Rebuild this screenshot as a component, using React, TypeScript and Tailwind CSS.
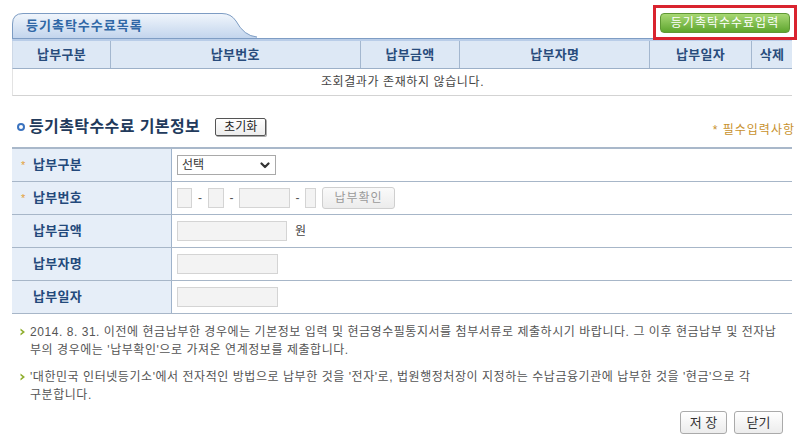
import React from "react";

const FONT = "font-['Liberation_Sans','Noto_Sans_CJK_KR',sans-serif]";

function Chevron() {
  return (
    <svg width="10" height="7" viewBox="0 0 10 7">
      <path d="M1.5 1.5 L5 5 L8.5 1.5" fill="none" stroke="#333" strokeWidth="2.2" strokeLinecap="round" strokeLinejoin="round" />
    </svg>
  );
}

function Arrow() {
  return (
    <svg width="6" height="8" viewBox="0 0 6 8" className="shrink-0 mt-[5px]">
      <path d="M0.5 0.5 L5 4 L0.5 7.5 L0.5 5.5 L2.5 4 L0.5 2.5 Z" fill="#8fae2e" />
    </svg>
  );
}

function FormRow({ label, required, children }: { label: string; required?: boolean; children: React.ReactNode }) {
  return (
    <div className="flex h-[33px] border-b border-[#a7b6c8]">
      <div className="w-[160px] shrink-0 bg-[#e6eef8] border-r border-[#9fb3cb] flex items-center pl-[9px]">
        <span className="w-[12px] text-[#e3a13a] text-[11px] leading-none">{required ? "*" : ""}</span>
        <span className="text-[13px] font-bold text-[#23497b] tracking-[0.3px]">{label}</span>
      </div>
      <div className="flex-1 flex items-center pl-[5px]">{children}</div>
    </div>
  );
}

function Input({ w }: { w: string }) {
  return <div className={`${w} h-[20px] bg-[#f3f3f3] border border-[#d4d4d4]`} />;
}

export default function App() {
  const cols = [
    { w: "w-[98px]", t: "납부구분" },
    { w: "w-[250px]", t: "납부번호" },
    { w: "w-[100px]", t: "납부금액" },
    { w: "w-[190px]", t: "납부자명" },
    { w: "w-[102px]", t: "납부일자" },
    { w: "w-[40px]", t: "삭제" },
  ];
  return (
    <div className={`w-[800px] h-[442px] bg-white relative overflow-hidden text-[12px] text-[#444] ${FONT}`}>
      <div className="ml-[12px] w-[780px]">
        {/* top bar */}
        <div className="flex justify-between items-start pt-[13px] h-[38px]">
          <div className="relative w-[245px] h-[25px]">
            <svg className="absolute inset-0" width="245" height="25" viewBox="0 0 245 25">
              <defs>
                <linearGradient id="tabg" x1="0" y1="0" x2="0" y2="1">
                  <stop offset="0" stopColor="#f1f6fc" />
                  <stop offset="0.45" stopColor="#dce7f5" />
                  <stop offset="1" stopColor="#c3d5ed" />
                </linearGradient>
              </defs>
              <path d="M0.5 25 L0.5 11 Q0.5 0.5 11 0.5 L210 0.5 Q219 0.5 224 8 Q232 23 245 24 L245 25 Z" fill="url(#tabg)" />
              <path d="M0.5 25 L0.5 11 Q0.5 0.5 11 0.5 L210 0.5 Q219 0.5 224 8 Q232 23 245 24" fill="none" stroke="#7d9cc3" strokeWidth="1" />
            </svg>
            <div className="relative pl-[14px] pt-[5px] text-[13px] font-bold text-[#2f67a6] leading-[16px] tracking-[1px]">등기촉탁수수료목록</div>
          </div>
          <button className="mr-[2px] w-[130px] h-[20px] rounded-[4px] border border-[#5f9835] bg-gradient-to-b from-[#a8d873] to-[#5ea62d] text-white text-[12px] leading-[18px] tracking-[1px]">
            등기촉탁수수료입력
          </button>
        </div>
        <div className="h-[1px] bg-[#7f9dc4]" />
        <div className="h-[2px] bg-[#b9cde8]" />
        {/* header */}
        <div className="flex h-[28px] bg-[#dde8f5] border-b border-[#9cb0c8] border-l border-l-[#cdd8e6]">
          {cols.map((c, i) => (
            <div
              key={c.t}
              className={`${c.w} flex items-center justify-center font-bold text-[13px] text-[#284c7c] tracking-[0.3px] ${i < cols.length - 1 ? "border-r border-[#a3b7cf]" : ""}`}
            >
              {c.t}
            </div>
          ))}
        </div>
        <div className="h-[27px] flex items-center justify-center border-b border-[#d3d3d3] border-l border-l-[#e3e3e3] text-[12px] text-[#444] tracking-[0.6px]">
          조회결과가 존재하지 않습니다.
        </div>

        {/* section title */}
        <div className="flex justify-between items-end mt-[21px] h-[19px]">
          <div className="flex items-center h-[19px]">
            <div className="ml-[5px] w-[8px] h-[8px] rounded-full border-[2px] border-[#3b73bf] bg-white" />
            <div className="ml-[4px] text-[16px] font-bold text-[#223a5c] leading-[19px] tracking-[0.4px]">등기촉탁수수료 기본정보</div>
            <button className="ml-[15px] w-[51px] h-[18px] border border-[#555] rounded-[2px] bg-gradient-to-b from-white to-[#ececec] text-[12px] text-[#222] leading-[16px] shadow-[1px_1px_0_#aaa]">
              초기화
            </button>
          </div>
          <div className="mr-[-3px] text-[12px] text-[#c8912c] leading-[14px] mb-[-1px] tracking-[1px]">* 필수입력사항</div>
        </div>

        {/* form */}
        <div className="mt-[11px] border-t-[2px] border-[#a9b8ca]">
          <FormRow label="납부구분" required>
            <div className="w-[99px] h-[20px] border border-[#a9a9a9] bg-white flex items-center justify-between pl-[4px] pr-[5px] text-[12px] text-[#333]">
              <span>선택</span>
              <Chevron />
            </div>
          </FormRow>
          <FormRow label="납부번호" required>
            <div className="flex items-center">
              <Input w="w-[15px]" />
              <span className="w-[16px] text-center text-[#555]">-</span>
              <Input w="w-[16px]" />
              <span className="w-[15px] text-center text-[#555]">-</span>
              <Input w="w-[51px]" />
              <span className="w-[15px] text-center text-[#555]">-</span>
              <Input w="w-[11px]" />
              <button className="ml-[6px] w-[73px] h-[22px] rounded-[3px] border border-[#cfcfcf] bg-gradient-to-b from-[#fafafa] to-[#ececec] text-[12px] text-[#9a9a9a] tracking-[1px]">
                납부확인
              </button>
            </div>
          </FormRow>
          <FormRow label="납부금액">
            <Input w="w-[110px]" />
            <span className="ml-[8px] text-[12px] text-[#444]">원</span>
          </FormRow>
          <FormRow label="납부자명">
            <Input w="w-[101px]" />
          </FormRow>
          <FormRow label="납부일자">
            <Input w="w-[101px]" />
          </FormRow>
        </div>

        {/* notes */}
        <div className="mt-[9px] pl-[8px] text-[12px] leading-[18px] text-[#555] tracking-[0.55px]">
          <div className="flex gap-[4px]">
            <Arrow />
            <div className="whitespace-nowrap">
              2014. 8. 31. 이전에 현금납부한 경우에는 기본정보 입력 및 현금영수필통지서를 첨부서류로 제출하시기 바랍니다. 그 이후 현금납부 및 전자납
              <br />
              부의 경우에는 '납부확인'으로 가져온 연계정보를 제출합니다.
            </div>
          </div>
          <div className="flex gap-[4px] mt-[9px]">
            <Arrow />
            <div className="whitespace-nowrap">
              '대한민국 인터넷등기소'에서 전자적인 방법으로 납부한 것을 '전자'로, 법원행정처장이 지정하는 수납금융기관에 납부한 것을 '현금'으로 각
              <br />
              구분합니다.
            </div>
          </div>
        </div>

        <div className="flex justify-end gap-[7px] mr-[9px] mt-[7px]">
          <button className="w-[47px] h-[23px] rounded-[3px] border border-[#aaa] bg-gradient-to-b from-white to-[#ececec] text-[13px] text-[#333]">저 장</button>
          <button className="w-[49px] h-[23px] rounded-[3px] border border-[#aaa] bg-gradient-to-b from-white to-[#ececec] text-[13px] text-[#333]">닫기</button>
        </div>
      </div>

      {/* annotation box */}
      <div className="absolute left-[653px] top-[5px] w-[144px] h-[35px] border-[3px] border-[#d9232f]" />
    </div>
  );
}
